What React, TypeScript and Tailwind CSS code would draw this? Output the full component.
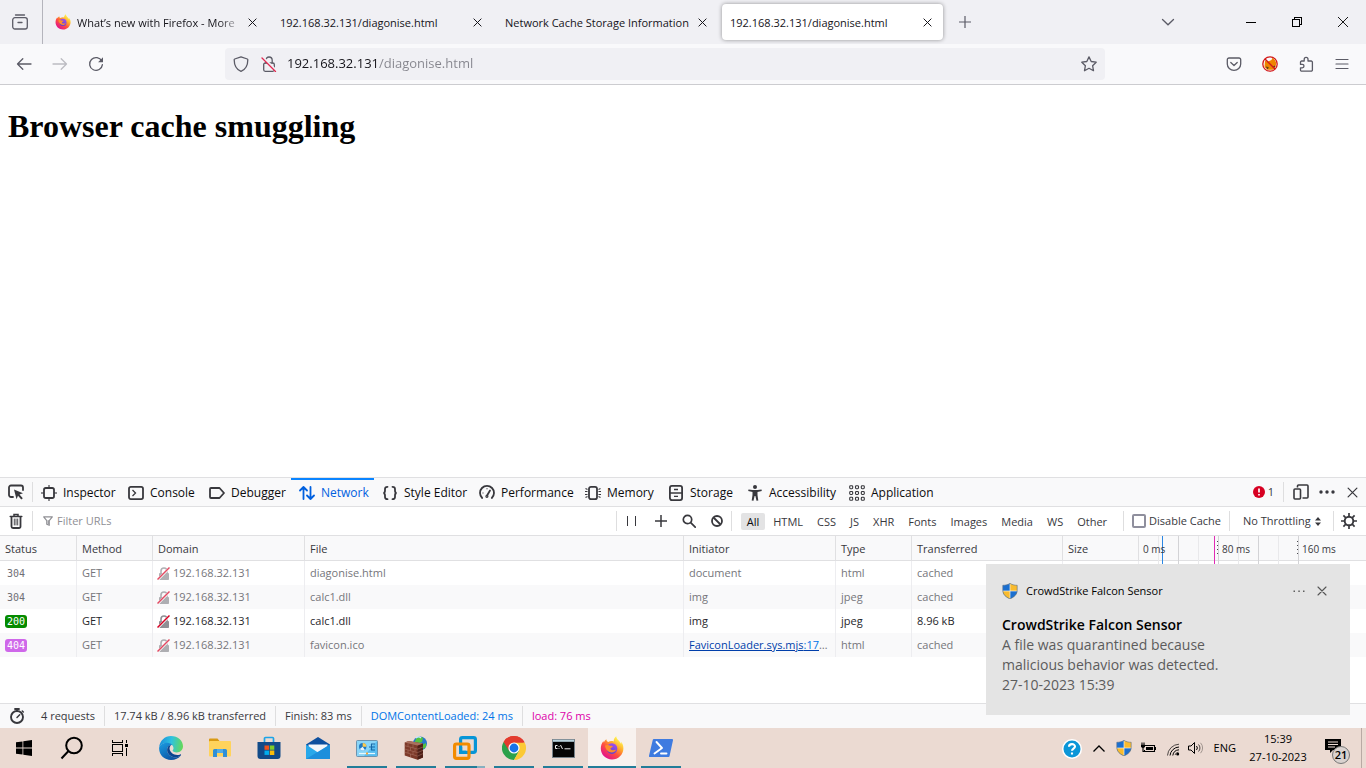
import React, { useState } from "react";

type IconProps = { className?: string };

/* ---------- shared drawings ---------- */

function Close({ className = "size-[9px]" }: IconProps) {
  return (
    <svg viewBox="0 0 10 10" className={className} fill="none" stroke="currentColor" strokeWidth="1.1" strokeLinecap="round">
      <path d="M1 1l8 8M9 1l-8 8" />
    </svg>
  );
}

function FirefoxLogo({ id, className = "size-4" }: IconProps & { id: string }) {
  return (
    <svg viewBox="0 0 24 24" className={className}>
      <defs>
        <linearGradient id={id + "a"} x1="0.85" y1="0.1" x2="0.2" y2="0.95">
          <stop offset="0.05" stopColor="#fff44f" />
          <stop offset="0.35" stopColor="#ffa42b" />
          <stop offset="0.6" stopColor="#ff4f3f" />
          <stop offset="0.95" stopColor="#e31587" />
        </linearGradient>
        <linearGradient id={id + "b"} x1="0.8" y1="0" x2="0.3" y2="1">
          <stop offset="0" stopColor="#a450f0" />
          <stop offset="1" stopColor="#5b43c8" />
        </linearGradient>
      </defs>
      <path
        d="M16.200.3c-1.900 1.500-2.600 3.500-2.500 5.100-1.700-.6-4-.5-5.400.6C7 5.600 6.400 4.400 6.400 3.200 5 4 4.200 5.300 3.900 6.500c-.3-.4-.5-.9-.5-1.500C1.700 7.200.8 9.800.8 12.500.8 18.600 5.800 23.400 12 23.400s11.400-4.900 11.400-11c0-2.800-1-5-2.300-6.600.2.900.2 1.600 0 2.200C20 4.900 16.600 3.900 16.200.3z"
        fill={"url(#" + id + "a)"}
      />
      <circle cx="12" cy="12.600" r="5.300" fill={"url(#" + id + "b)"} />
      <path d="M5 9.500c2-.9 4-.6 5.200.3 1 0 2.300.1 2.600.6-.1.900-1.700 1-2.300 1.900-.3.900.8 2 2.300 2 1.300 0 2.200-.6 3.300-.5-.8 1.800-2.500 2.700-4.300 2.700-3.500 0-6.400-3-6.800-7z" fill="#ff8b2b" />
    </svg>
  );
}

function UacShield({ className = "size-4" }: IconProps) {
  return (
    <svg viewBox="0 0 16 16" className={className}>
      <path d="M8 .3C6 1.700 3.500 2.300.8 2.300v4.900C.8 11.500 4 14.300 8 15.800z" fill="#1a6fd0" />
      <path d="M8 .3c2 1.400 4.500 2 7.200 2v4.900c0 4.300-3.200 7.100-7.200 8.600z" fill="#f9bb2d" />
      <path d="M.8 8H8v7.800C4.200 14.400 1.100 11.900.8 8z" fill="#f9bb2d" />
      <path d="M15.200 8H8v7.800c3.800-1.400 6.900-3.900 7.200-7.800z" fill="#1a6fd0" />
      <path d="M8 .3v15.500M.8 8h14.400" stroke="#f4f1e6" strokeWidth="0.700" />
      <path d="M8 .3C6 1.700 3.500 2.300.8 2.300v4.900c0 4.300 3.200 7.100 7.200 8.600 4-1.500 7.200-4.300 7.200-8.600V2.300C12.500 2.300 10 1.700 8 .3z" fill="none" stroke="#5d7186" strokeWidth="0.600" />
    </svg>
  );
}

/* ---------- browser tabs ---------- */

const pageTabs = [
  { title: "What’s new with Firefox - More", icon: true },
  { title: "192.168.32.131/diagonise.html", icon: false },
  { title: "Network Cache Storage Information", icon: false },
  { title: "192.168.32.131/diagonise.html", icon: false },
];

function TabStrip() {
  const [active, setActive] = useState(3);
  return (
    <header className="flex h-11 items-stretch bg-[#f0f0f4] text-[#15141a]">
      <button aria-label="Firefox View" className="flex w-[43px] items-center justify-center border-r border-[#b4b4bc] pr-0.5 text-[#5b5b66]">
        <svg viewBox="0 0 16 16" className="size-4" fill="none" stroke="currentColor" strokeWidth="1.300" strokeLinecap="round">
          <path d="M3.500 1h9" />
          <rect x="0.700" y="3.700" width="14.600" height="11.300" rx="2.200" />
          <path d="M2 3.700M6 8.500h4" />
        </svg>
      </button>
      <div role="tablist" className="ml-1 flex items-center gap-1">
        {pageTabs.map((t, i) => (
          <div
            key={i}
            className={
              i === active
                ? "flex h-9 w-[221px] items-center rounded bg-white pr-[11px] pl-2 shadow-[0_0_4px_rgba(0,0,0,0.400)]"
                : "flex h-9 w-[221px] items-center rounded pr-[11px] pl-2"
            }
          >
            {t.icon && <FirefoxLogo id="tabfx" className="mr-1.5 size-4 shrink-0" />}
            <button
              role="tab"
              aria-selected={i === active}
              onClick={() => setActive(i)}
              className={
                t.icon
                  ? "min-w-0 flex-1 overflow-hidden mask-r-from-85% pt-0.5 text-left text-[11px] whitespace-nowrap"
                  : "min-w-0 flex-1 overflow-hidden pt-0.5 text-left text-[11px] whitespace-nowrap"
              }
            >
              {t.title}
            </button>
            <button aria-label="Close tab" className="ml-1 flex shrink-0 items-center">
              <Close />
            </button>
          </div>
        ))}
      </div>
      <button aria-label="New tab" className="ml-1 flex w-9 items-center justify-center text-[#5b5b66]">
        <svg viewBox="0 0 12 12" className="size-3" stroke="currentColor" strokeWidth="1.200">
          <path d="M6 0v12M0 6h12" />
        </svg>
      </button>
      <div className="flex-1" />
      <button aria-label="List all tabs" className="mr-[42px] flex w-9 items-center justify-center text-[#5b5b66]">
        <svg viewBox="0 0 14 8" className="h-2 w-3.5" fill="none" stroke="currentColor" strokeWidth="1.300" strokeLinecap="round">
          <path d="M1.500 1.500L7 6.800l5.500-5.300" />
        </svg>
      </button>
      <button aria-label="Minimize" className="flex w-[46px] items-center justify-center">
        <span className="h-px w-2.5 bg-black" />
      </button>
      <button aria-label="Restore" className="flex w-[46px] items-center justify-center">
        <svg viewBox="0 0 10 10" className="size-2.5" fill="none" stroke="#000" shapeRendering="crispEdges">
          <path d="M.5 2.500h7v7h-7zM2.500 2.500v-2h7v7h-2" />
        </svg>
      </button>
      <button aria-label="Close window" className="flex w-[46px] items-center justify-center">
        <svg viewBox="0 0 10 10" className="size-2.5" fill="none" stroke="#000" strokeWidth="0.900">
          <path d="M0 0l10 10M10 0L0 10" />
        </svg>
      </button>
    </header>
  );
}

/* ---------- navigation bar ---------- */

function NavButton({ label, dim, children }: { label: string; dim?: boolean; children: React.ReactNode }) {
  return (
    <button aria-label={label} className={dim ? "flex w-9 items-center justify-center text-[#bcbcc2]" : "flex w-9 items-center justify-center text-[#5b5b66]"}>
      {children}
    </button>
  );
}

function NavBar() {
  return (
    <nav className="flex h-[41px] items-stretch border-b border-[#ccccd0] bg-[#f9f9fb] px-1.5">
      <NavButton label="Back">
        <svg viewBox="0 0 16 16" className="size-4" fill="none" stroke="currentColor" strokeWidth="1.300" strokeLinecap="round" strokeLinejoin="round">
          <path d="M15 8H1.500M6.800 2.700L1.500 8l5.300 5.300" />
        </svg>
      </NavButton>
      <NavButton label="Forward" dim>
        <svg viewBox="0 0 16 16" className="size-4" fill="none" stroke="currentColor" strokeWidth="1.300" strokeLinecap="round" strokeLinejoin="round">
          <path d="M1 8h13.500M9.200 2.700L14.500 8l-5.300 5.300" />
        </svg>
      </NavButton>
      <NavButton label="Reload">
        <svg viewBox="0 0 16 16" className="size-4" fill="none" stroke="currentColor" strokeWidth="1.300" strokeLinecap="round">
          <path d="M13.800 5.200A6.400 6.400 0 1 0 14.400 8.600" />
          <path d="M15 1.300v4.900h-4.900z" fill="currentColor" stroke="none" />
        </svg>
      </NavButton>
      <div className="mx-[111px] my-1 flex flex-1 items-center rounded bg-[#f0f0f4] px-2 text-[#5b5b66]">
        <button aria-label="Tracking protection">
          <svg viewBox="0 0 16 16" className="size-4" fill="none" stroke="currentColor" strokeWidth="1.300" strokeLinejoin="round">
            <path d="M8 .8L14.300 3c.3.100.5.400.5.700C14.800 9.500 12.500 13.500 8 15.300 3.500 13.500 1.200 9.500 1.200 3.700c0-.3.200-.6.500-.7z" />
          </svg>
        </button>
        <button aria-label="Connection not secure" className="ml-3">
          <svg viewBox="0 0 16 16" className="size-4" fill="none" strokeLinecap="round">
            <path d="M4.800 7V4.200a3.200 3.200 0 0 1 6.400 0V7" stroke="currentColor" strokeWidth="1.300" />
            <rect x="2.700" y="7" width="10.600" height="8.300" rx="1.500" stroke="currentColor" strokeWidth="1.300" />
            <path d="M1.800 1.400l13.400 13.400" stroke="#f0f0f4" strokeWidth="2.500" />
            <path d="M1 2l13.500 13.500" stroke="#e22850" strokeWidth="1.300" />
          </svg>
        </button>
        <input
          aria-label="Address"
          defaultValue="192.168.32.131/diagonise.html"
          className="ml-2.5 min-w-0 flex-1 bg-[linear-gradient(90deg,#15141a_91px,#85858d_91px)] bg-clip-text text-[13px] text-transparent outline-none"
        />
        <button aria-label="Bookmark this page">
          <svg viewBox="0 0 16 16" className="size-4" fill="none" stroke="currentColor" strokeWidth="1.300" strokeLinejoin="round">
            <path d="M8 .9l2.200 4.600 5 .7-3.600 3.500.9 5L8 12.300l-4.500 2.400.9-5L.8 6.200l5-.7z" />
          </svg>
        </button>
      </div>
      <NavButton label="Save to Pocket">
        <svg viewBox="0 0 16 16" className="size-4" fill="none" stroke="currentColor" strokeWidth="1.300" strokeLinecap="round" strokeLinejoin="round">
          <path d="M3 2h10a1.700 1.700 0 0 1 1.700 1.700V8a6.700 6.300 0 0 1-13.400 0V3.700A1.700 1.700 0 0 1 3 2z" />
          <path d="M4.800 6.500L8 9.500l3.200-3" />
        </svg>
      </NavButton>
      <NavButton label="FoxyProxy">
        <svg viewBox="0 0 16 16" className="size-4" fill="none">
          <path d="M3 4.500l2.500 1.300L9.500 4l1-2.200L13 4l1.300 3-.8 4-2.500 2.800H5.500L2.500 11z" fill="#ee8500" />
          <path d="M4 11l2 .5-.7 1.500M11 11.500l2-1.500" stroke="#5a3a1a" strokeWidth="1.100" />
          <circle cx="8" cy="8" r="7.200" stroke="#d31818" strokeWidth="1.300" />
          <path d="M3 3l10 10" stroke="#d31818" strokeWidth="1.400" />
        </svg>
      </NavButton>
      <NavButton label="Extensions">
        <svg viewBox="0 0 16 16" className="size-4" fill="none" stroke="currentColor" strokeWidth="1.300" strokeLinejoin="round">
          <path d="M3.700 5H6.200V3.200a1.900 1.900 0 0 1 3.800 0V5h3.200a1.200 1.200 0 0 1 1.200 1.200v7.700a1.200 1.200 0 0 1-1.200 1.200H3.700a1.200 1.200 0 0 1-1.200-1.200v-2.100h1.800a1.700 1.700 0 0 0 0-3.400H2.500V6.200A1.200 1.200 0 0 1 3.700 5z" />
        </svg>
      </NavButton>
      <NavButton label="Open application menu">
        <svg viewBox="0 0 14 14" className="size-3.5" stroke="currentColor" strokeWidth="1.200" strokeLinecap="round">
          <path d="M1 2.500h12M1 7h12M1 11.500h12" />
        </svg>
      </NavButton>
    </nav>
  );
}

/* ---------- devtools ---------- */

const stroke = { fill: "none", stroke: "currentColor", strokeWidth: 1.8 } as const;

const panels: { name: string; width: string; icon: React.ReactNode }[] = [
  {
    name: "Inspector",
    width: "w-[87px]",
    icon: (
      <g {...stroke}>
        <rect x="3" y="3" width="10" height="10" rx="1.800" />
        <path d="M8 0v3M8 13v3M0 8h3M13 8h3" strokeWidth="1.500" opacity="0.750" />
      </g>
    ),
  },
  {
    name: "Console",
    width: "w-[81px]",
    icon: (
      <g {...stroke}>
        <rect x="1" y="1.900" width="14" height="12.200" rx="1.800" />
        <path d="M4.500 5l3 3-3 3" strokeWidth="1.300" />
      </g>
    ),
  },
  {
    name: "Debugger",
    width: "w-[90px]",
    icon: <path {...stroke} strokeLinejoin="round" d="M2 3h8.500L15 8l-4.500 5H2a1 1 0 0 1-1-1V4a1 1 0 0 1 1-1z" />,
  },
  {
    name: "Network",
    width: "w-[83px]",
    icon: <path {...stroke} strokeLinecap="round" strokeLinejoin="round" d="M4.500 14V2M1 5.500L4.500 2 8 5.500M11.500 2v12M8 10.500l3.500 3.500 3.500-3.500" />,
  },
  {
    name: "Style Editor",
    width: "w-[97px]",
    icon: (
      <path
        {...stroke}
        strokeLinecap="round"
        d="M5.500 1.800C3.500 1.800 3 2.600 3 4v1.500C3 7 2.500 8 1.300 8 2.500 8 3 9 3 10.500V12c0 1.400.5 2.200 2.500 2.200M10.500 1.800c2 0 2.500.8 2.500 2.200v1.500C13 7 13.500 8 14.700 8 13.500 8 13 9 13 10.500V12c0 1.400-.5 2.200-2.500 2.200"
      />
    ),
  },
  {
    name: "Performance",
    width: "w-[106px]",
    icon: (
      <g {...stroke}>
        <path d="M3.200 13A7 7 0 1 1 12.800 13" strokeLinecap="round" />
        <path d="M11 5.500L8.200 10.200" strokeLinecap="round" />
        <circle cx="7.900" cy="11.300" r="1" strokeWidth="1.200" />
        <path d="M3.500 8h1M8 3.300v1" strokeWidth="1.100" />
      </g>
    ),
  },
  {
    name: "Memory",
    width: "w-[83px]",
    icon: (
      <g {...stroke}>
        <rect x="4" y="1.800" width="8" height="12.400" rx="2" />
        <path d="M.5 3.500l2 1M0 6.500h2.500M0 9.500h2.500M.5 12.500l2-1M15.500 3.500l-2 1M16 6.500h-2.500M16 9.500h-2.500M15.500 12.500l-2-1" strokeWidth="1.100" />
      </g>
    ),
  },
  {
    name: "Storage",
    width: "w-[79px]",
    icon: (
      <g {...stroke}>
        <rect x="1.900" y="0.900" width="12.200" height="14.200" rx="2" />
        <path d="M2 8h12" strokeWidth="1.500" />
        <path d="M6 4.500h4M6 11.300h4" strokeWidth="1.300" />
      </g>
    ),
  },
  {
    name: "Accessibility",
    width: "w-[102px]",
    icon: (
      <g fill="currentColor">
        <circle cx="8" cy="2.100" r="2" />
        <path d="M1.500 4.500l4 .6h5l4-.6.300 1.600-4.300 1V10l.8 5.500-1.800.3L8.400 11h-.8l-1.100 4.800-1.800-.3.800-5.500V7.100l-4.300-1z" />
      </g>
    ),
  },
  {
    name: "Application",
    width: "w-[99px]",
    icon: (
      <g fill="none" stroke="currentColor" strokeWidth="1.100">
        {[2.2, 8, 13.8].map((y) => [2.2, 8, 13.8].map((x) => <rect key={x + "-" + y} x={x - 1.500} y={y - 1.500} width="3" height="3" rx="0.900" />))}
      </g>
    ),
  },
];

function Divider({ className = "" }: IconProps) {
  return <span className={"h-5 w-px shrink-0 bg-[#dededf] " + className} />;
}

function DevtoolsTabs() {
  const [panel, setPanel] = useState("Network");
  return (
    <div className="flex h-7 items-center bg-[#f9f9fa] text-[#38383d]">
      <button aria-label="Pick an element" className="flex w-8 justify-center">
        <svg viewBox="0 0 16 16" className="size-4">
          <path d="M5 13H3a2 2 0 0 1-2-2V3.500a2 2 0 0 1 2-2h10a2 2 0 0 1 2 2V6" {...stroke} strokeLinecap="round" />
          <path d="M6 5.500l9 3.800-3.500 1.200 3.300 3.700-1.500 1.300-3.300-3.700-1.500 3.400z" fill="currentColor" />
        </svg>
      </button>
      <Divider />
      <div role="tablist" className="flex self-stretch">
        {panels.map((p) => (
          <button
            key={p.name}
            role="tab"
            aria-selected={p.name === panel}
            onClick={() => setPanel(p.name)}
            className={
              (p.name === panel ? "border-[#0a84ff] text-[#0060df] " : "border-transparent ") +
              "flex items-center gap-1.5 border-t-2 pl-2 text-xs whitespace-nowrap " +
              p.width
            }
          >
            <svg viewBox="0 0 16 16" className="size-4 shrink-0">
              {p.icon}
            </svg>
            <span className={p.name === panel ? "" : "text-[#0c0c0d]"}>{p.name}</span>
          </button>
        ))}
      </div>
      <div className="flex-1" />
      <button aria-label="1 error" className="mr-[9px] flex items-center gap-[3px] text-[11px]">
        <svg viewBox="0 0 12 12" className="size-3">
          <circle cx="6" cy="6" r="6" fill="#d70022" />
          <path d="M6 2.500v4M6 8v1.600" stroke="#fff" strokeWidth="1.700" />
        </svg>
        1
      </button>
      <Divider />
      <button aria-label="Responsive design mode" className="ml-[9px]">
        <svg viewBox="0 0 16 16" className="size-4" {...stroke} strokeWidth="1.600">
          <path d="M4.500 3.500V2a1 1 0 0 1 1-1H14a1 1 0 0 1 1 1v11a1 1 0 0 1-1 1H9.500" />
          <rect x="1" y="5" width="6.500" height="10" rx="1" />
        </svg>
      </button>
      <button aria-label="Customize developer tools" className="ml-2.5">
        <svg viewBox="0 0 16 16" className="size-4" fill="currentColor">
          <circle cx="2" cy="8" r="1.700" />
          <circle cx="8" cy="8" r="1.700" />
          <circle cx="14" cy="8" r="1.700" />
        </svg>
      </button>
      <button aria-label="Close developer tools" className="mr-2 ml-3">
        <Close className="size-[11px]" />
      </button>
    </div>
  );
}

const filters = ["All", "HTML", "CSS", "JS", "XHR", "Fonts", "Images", "Media", "WS", "Other"];

function FilterBar() {
  const [active, setActive] = useState("All");
  return (
    <div className="flex h-[29px] items-center border-t border-[#e0e0e2] bg-white text-[11px] text-[#38383d]">
      <button aria-label="Clear" className="flex w-8 justify-center">
        <svg viewBox="0 0 16 16" className="size-4" fill="none" stroke="currentColor" strokeLinecap="round">
          <path d="M2.200 3.500h11.600M6 3V1.500h4V3" strokeWidth="1.500" />
          <path d="M3.500 4.500v9a1.500 1.500 0 0 0 1.500 1.500h6a1.500 1.500 0 0 0 1.500-1.500v-9" strokeWidth="1.800" />
          <path d="M6.300 6v6M8 6v6M9.700 6v6" strokeWidth="0.900" />
        </svg>
      </button>
      <Divider />
      <label className="ml-2.5 flex flex-1 items-center gap-1">
        <svg viewBox="0 0 12 12" className="size-2.5" fill="none" stroke="#8f8f94" strokeWidth="1.400" strokeLinejoin="round">
          <path d="M.8 1h10.400L7.500 5.500v5.700l-3-1.400V5.500z" />
          <path d="M6.300 5v5" />
        </svg>
        <input aria-label="Filter URLs" placeholder="Filter URLs" className="min-w-0 flex-1 outline-none placeholder:text-[#8f8f94]" />
      </label>
      <Divider />
      <button aria-label="Pause" className="flex w-[30px] justify-center">
        <svg viewBox="0 0 9 10" className="h-2.5 w-[9px]" stroke="currentColor" strokeWidth="1" shapeRendering="crispEdges">
          <path d="M.5 0v10M8.500 0v10" />
        </svg>
      </button>
      <button aria-label="New request" className="flex w-7 justify-center">
        <svg viewBox="0 0 12 12" className="size-3" stroke="currentColor" strokeWidth="1.500">
          <path d="M6 0v12M0 6h12" />
        </svg>
      </button>
      <button aria-label="Search" className="flex w-7 justify-center">
        <svg viewBox="0 0 14 14" className="size-3.5" fill="none" stroke="currentColor" strokeWidth="1.700" strokeLinecap="round">
          <circle cx="5.500" cy="5.500" r="4.200" />
          <path d="M8.700 8.700l4.500 4.500" />
        </svg>
      </button>
      <button aria-label="Request blocking" className="flex w-7 justify-center">
        <svg viewBox="0 0 12 12" className="size-3" fill="none" stroke="currentColor" strokeWidth="1.800">
          <circle cx="6" cy="6" r="5" />
          <path d="M2.500 2.500l7 7" />
        </svg>
      </button>
      <Divider />
      <div className="ml-[9px] flex gap-0.5">
        {filters.map((f) => (
          <button
            key={f}
            aria-pressed={f === active}
            onClick={() => setActive(f)}
            className={f === active ? "h-[17px] rounded-[2px] bg-[#e3e3e4] px-1.5 leading-[17px] text-[#0c0c0d]" : "h-[17px] rounded-[2px] px-1.5 leading-[17px]"}
          >
            {f}
          </button>
        ))}
      </div>
      <Divider className="ml-2.5" />
      <label className="mx-2 flex items-center gap-[3px]">
        <input type="checkbox" className="size-3.5 appearance-none rounded-[2px] border-2 border-[#8f8f9d] bg-white checked:bg-[#0060df]" />
        Disable Cache
      </label>
      <Divider />
      <label className="mr-3 ml-[13px] flex items-center gap-1">
        <select aria-label="Throttling" className="appearance-none bg-transparent outline-none">
          <option>No Throttling</option>
        </select>
        <svg viewBox="0 0 6 9" className="h-[9px] w-1.5" fill="currentColor">
          <path d="M0 3.500h6L3 0zM0 5.500h6L3 9z" />
        </svg>
      </label>
      <Divider />
      <button aria-label="Network settings" className="flex w-8 justify-center pr-0.5">
        <svg viewBox="0 0 16 16" className="size-4" fill="none" stroke="currentColor">
          <circle cx="8" cy="8" r="4.300" strokeWidth="1.900" />
          <path d="M8 0v3.500M8 12.500V16M0 8h3.500M12.500 8H16M2.400 2.400l2.400 2.400M11.200 11.200l2.400 2.400M13.600 2.400l-2.400 2.400M4.800 11.200l-2.400 2.400" strokeWidth="1.700" />
        </svg>
      </button>
    </div>
  );
}

const requests = [
  { status: "304", file: "diagonise.html", initiator: "document", type: "html", transferred: "cached", live: false },
  { status: "304", file: "calc1.dll", initiator: "img", type: "jpeg", transferred: "cached", live: false },
  { status: "200", file: "calc1.dll", initiator: "img", type: "jpeg", transferred: "8.96 kB", live: true },
  { status: "404", file: "favicon.ico", initiator: "", type: "html", transferred: "cached", live: false },
];

const badge: Record<string, string> = {
  "304": "text-[#6f6f75] px-0.5",
  "200": "bg-[#058b00] text-white px-0.5",
  "404": "bg-[#cf68ea] text-white px-0.5",
};

function InsecureLock() {
  return (
    <svg viewBox="0 0 13 13" className="h-[13px] w-[13px] shrink-0">
      <path d="M4 6.500V4a3 3 0 0 1 6 0v2.500" fill="none" stroke="#8f8f94" strokeWidth="1.600" />
      <rect x="2" y="6" width="10" height="7" rx="0.800" fill="#8f8f94" />
      <path d="M1 12.500L12.500 .8" stroke="#fff" strokeWidth="2.400" />
      <path d="M.5 12.500L12.500 .5" stroke="#d70022" strokeWidth="1.500" />
    </svg>
  );
}

function RequestTable() {
  const head = "relative h-[25px] border-r border-b border-[#e0e0e2] px-[5px] pt-0.5 text-left font-normal";
  const cell = "truncate border-r border-[#ededf0] px-[5px]";
  return (
    <table className="w-full table-fixed border-separate border-spacing-0 text-[11px] text-[#38383d]">
      <colgroup>
        <col className="w-[77px]" />
        <col className="w-[76px]" />
        <col className="w-[152px]" />
        <col />
        <col className="w-[152px]" />
        <col className="w-[76px]" />
        <col className="w-[151px]" />
        <col className="w-[76px]" />
        <col className="w-[227px]" />
      </colgroup>
      <thead className="bg-[#f9f9fa]">
        <tr>
          {["Status", "Method", "Domain", "File", "Initiator", "Type", "Transferred", "Size"].map((h) => (
            <th key={h} className={head}>
              {h}
            </th>
          ))}
          <th className="relative h-[25px] border-b border-[#e0e0e2] p-0 font-normal">
            <svg className="absolute top-0 left-0 h-7 w-full" shapeRendering="crispEdges">
              <path d="M19.500 0v28M59.500 0v28M99.500 0v28M139.500 0v28" stroke="#e9e9eb" />
              <path d="M39.500 0v28M79.500 0v28M119.500 0v28M159.500 0v28" stroke="#d3d3d6" />
              <path d="M78.500 5v15M158.500 5v15" stroke="#4a4a4f" strokeDasharray="1 3" />
              <path d="M23.500 0v28" stroke="#2b87e3" />
              <path d="M75.500 0v28" stroke="#e02cb4" />
            </svg>
            <div className="relative flex pt-0.5 text-left text-[10px]">
              <span className="w-[79px] pl-1">0 ms</span>
              <span className="w-20 pl-1">80 ms</span>
              <span className="pl-1">160 ms</span>
            </div>
          </th>
        </tr>
      </thead>
      <tbody>
        {requests.map((r, i) => (
          <tr key={i} className={(i % 2 ? "bg-[#f9f9fa] " : "bg-white ") + "h-6 " + (r.live ? "text-[#27272b]" : "text-[#76767b]")}>
            <td className={cell}>
              <span className={"inline-block h-[13px] rounded-[3px] align-middle font-['DejaVu_Sans_Mono',monospace] text-[10px] leading-[13px] " + badge[r.status]}>{r.status}</span>
            </td>
            <td className={cell}>GET</td>
            <td className={cell}>
              <div className={r.live ? "-ml-px flex items-center gap-[3px]" : "-ml-px flex items-center gap-[3px] [&>svg]:opacity-70"}>
                <InsecureLock />
                192.168.32.131
              </div>
            </td>
            <td className={cell}>{r.file}</td>
            <td className={cell}>
              {r.initiator || (
                <>
                  <a href="#favicon-loader" className="text-[#003eaa] underline">
                    FaviconLoader.sys.mjs<span className="text-[#0074e8]">:17</span>
                  </a>
                  …
                </>
              )}
            </td>
            <td className={cell}>{r.type}</td>
            <td className={cell}>{r.transferred}</td>
            <td className={cell} />
            <td />
          </tr>
        ))}
      </tbody>
    </table>
  );
}

function StatusBar() {
  return (
    <div className="flex h-[25px] items-center border-t border-[#e0e0e2] bg-[#f9f9fa] text-[11px] text-[#38383d]">
      <button aria-label="Performance analysis" className="mr-[7px] ml-[9px]">
        <svg viewBox="0 0 16 16" className="size-4" fill="none" stroke="currentColor" strokeLinecap="round">
          <circle cx="8" cy="9" r="6" strokeWidth="1.900" />
          <path d="M6 1h4M8 1v2" strokeWidth="1.800" />
          <path d="M8 9.500L10.700 6.800" strokeWidth="1.500" />
          <path d="M13.300 3l1 1" strokeWidth="1.500" />
        </svg>
      </button>
      <span className="px-[9px]">4 requests</span>
      <Divider className="h-4" />
      <span className="px-[9px]">17.74 kB / 8.96 kB transferred</span>
      <Divider className="h-4" />
      <span className="px-[9px]">Finish: 83 ms</span>
      <Divider className="h-4" />
      <span className="px-[9px] text-[#0074e8]">DOMContentLoaded: 24 ms</span>
      <Divider className="h-4" />
      <span className="px-[9px] text-[#dd00a9]">load: 76 ms</span>
    </div>
  );
}

/* ---------- notification ---------- */

function Toast() {
  return (
    <aside className="fixed right-4 bottom-[53px] h-[151px] w-[364px] bg-[#e4e4e4] px-4 pt-[19px]">
      <div className="flex h-4 items-center">
        <UacShield />
        <span className="ml-2 flex-1 text-[11px] text-black">CrowdStrike Falcon Sensor</span>
        <button aria-label="More options">
          <svg viewBox="0 0 12 4" className="h-1 w-3" fill="#5f5f5f">
            <path d="M.5 1.500h1.500V3H.5zM5.300 1.500h1.500V3H5.300zM10 1.500h1.500V3H10z" />
          </svg>
        </button>
        <button aria-label="Dismiss" className="mr-[7px] ml-3 text-[#555]">
          <Close className="size-2.5" />
        </button>
      </div>
      <div className="mt-4 text-[14px] leading-5 text-[#5c5c5c]">
        <h2 className="font-semibold text-black">CrowdStrike Falcon Sensor</h2>
        <p className="w-60">A file was quarantined because malicious behavior was detected.</p>
        <p>27-10-2023 15:39</p>
      </div>
    </aside>
  );
}

/* ---------- taskbar ---------- */

function Edge() {
  return (
    <svg viewBox="0 0 24 24" className="size-6">
      <defs>
        <linearGradient id="edgeTop" x1="0" y1="0.400" x2="1" y2="0.500">
          <stop offset="0" stopColor="#1b8edb" />
          <stop offset="0.500" stopColor="#2fc2df" />
          <stop offset="1" stopColor="#65d957" />
        </linearGradient>
        <linearGradient id="edgeLow" x1="0" y1="0" x2="0.700" y2="1">
          <stop offset="0" stopColor="#1b9de2" />
          <stop offset="1" stopColor="#0c4fa0" />
        </linearGradient>
      </defs>
      <path d="M.2 11C.8 4.800 5.800 0 12 0c6.900 0 12 4.800 12 10.300 0 3.700-2.900 6.200-6.200 6.200-2.500 0-4.200-.9-4.200-1.900 0-.6.900-.9.900-2.400C14.500 9.600 11.900 7 8 7 4 7 1.200 9 .2 11z" fill="url(#edgeTop)" />
      <path d="M.1 12.500C0 9.500 3.500 6.800 8 6.800c2.300 0 4.200.9 5.400 2.200-3.500-.3-5.300 2.200-5.300 5 0 4 4 7.300 8.400 7.300 2 0 3.900-.8 5.300-1.900C19.700 22.200 16.200 24 12 24 5.300 24 .1 19 .1 12.500z" fill="url(#edgeLow)" />
      <path d="M8.100 14c0 4 4 7.300 8.400 7.300 2 0 3.900-.8 5.300-1.900.5-.6.200-1.300-.5-1-5 1.900-10.200-1.200-10.700-5.400-.2-1.600.6-3.200 1.700-4-2.900.2-4.200 2.400-4.200 5z" fill="#0b4590" />
    </svg>
  );
}

function Folder() {
  return (
    <svg viewBox="0 0 22 20" className="h-5 w-[22px]">
      <path d="M0 1.500A1 1 0 0 1 1 .5h7.500l2 2.500H21v6H0z" fill="#d99a14" />
      <path d="M1 3h20a1 1 0 0 1 1 1v13.500a1 1 0 0 1-1 1H1a1 1 0 0 1-1-1V4a1 1 0 0 1 1-1z" fill="#ffd35c" />
      <path d="M4 19v-6.500A1.500 1.500 0 0 1 5.500 11h11a1.500 1.500 0 0 1 1.500 1.500V19h-4v-4H8v4z" fill="#2f8fd8" />
      <path d="M8 15h6v-4H8z" fill="#51abe8" />
    </svg>
  );
}

function Store() {
  return (
    <svg viewBox="0 0 24 24" className="size-6">
      <path d="M7.500 7V2.500A1 1 0 0 1 8.500 1.500h7a1 1 0 0 1 1 1V7" fill="none" stroke="#1ba4e8" strokeWidth="1.700" />
      <path d="M.5 6h23v14a3 3 0 0 1-3 3h-17a3 3 0 0 1-3-3z" fill="#124a88" />
      <path d="M7.500 9.500H12v4.300H7.500z" fill="#f1511b" />
      <path d="M12.800 9.500h4.500v4.300h-4.500z" fill="#80cc28" />
      <path d="M7.500 14.600H12v4.300H7.500z" fill="#00adef" />
      <path d="M12.800 14.600h4.500v4.300h-4.500z" fill="#fbbc09" />
    </svg>
  );
}

function Mail() {
  return (
    <svg viewBox="0 0 24 24" className="size-6">
      <path d="M0 8.500L12 1l12 7.500v5H0z" fill="#0d4f9e" />
      <path d="M2.500 8.500h19v6l-9.500 5-9.500-5z" fill="#f4f6fa" />
      <path d="M0 8.500l12 8 12-8V23H0z" fill="#28a8ea" />
      <path d="M0 23l24-14.500V23z" fill="#1c8fdc" />
    </svg>
  );
}

function ControlPanel() {
  return (
    <svg viewBox="0 0 22 17" className="h-[17px] w-[22px]">
      <rect x="0.500" y="0.500" width="21" height="16" rx="1" fill="#59bdf0" stroke="#6d93ae" />
      <path d="M1 1h20L8 16H1z" fill="#8ad5f8" />
      <circle cx="6.700" cy="6.700" r="3.700" fill="#1e78c2" />
      <path d="M6.700 6.700V3a3.700 3.700 0 0 1 3.700 3.700z" fill="#ffc94a" />
      <path d="M6.700 6.700L3.800 9a3.700 3.700 0 0 0 5 .7z" fill="#e8f6ff" />
      <path d="M13 7h2M15.500 4v6M15 4h4M15 7h4M15 10h4" stroke="#1668a8" strokeWidth="1.200" fill="none" />
      <path d="M3 13.500h16" stroke="#e8f8ff" strokeWidth="1.200" />
      <path d="M10 12.500h2v2h-2z" fill="#f4a63c" />
    </svg>
  );
}

function Firewall() {
  return (
    <svg viewBox="0 0 24 24" className="size-6">
      <circle cx="16" cy="7.500" r="7" fill="#2777c9" />
      <path d="M12 3c3-3 6-2 7-1l-1 4-3 1-1 3-4-2zM18 9l4-2v4l-3 2z" fill="#55c33f" />
      <path d="M12 2c2-1.500 4-1 5 0" stroke="#c4ecff" strokeWidth="1.200" fill="none" />
      <path d="M.7 6.500l4-1.500L19 7.500v14L13.500 23.800.7 19.500z" fill="#7d3a2a" />
      <path d="M13.500 9.500L19 7.500v14l-5.500 2.300z" fill="#4e2018" />
      <path d="M.7 6.500l4-1.500L19 7.500l-5.500 2z" fill="#a9705f" />
      <path d="M.7 9.700l12.800 3.400L19 11M.7 13l12.800 3.600 5.500-2.300M.7 16.200l12.800 3.900 5.500-2.500M4 7.500v3M9 8.700v3.200M6.500 11.500v3M11 12.600v3M4 14v3M9 15.500v3.200M6.500 18v3" stroke="#b5806f" strokeWidth="0.450" fill="none" />
    </svg>
  );
}

function Vmware() {
  return (
    <svg viewBox="0 0 24 24" className="size-6" fill="none" strokeWidth="3.200">
      <rect x="7.600" y="1.600" width="14.800" height="14.800" rx="1.800" stroke="#0695d7" />
      <rect x="1.600" y="8" width="14.400" height="14.400" rx="1.800" stroke="#f38b00" />
      <path d="M7.600 11V16.400H13" stroke="#0695d7" />
    </svg>
  );
}

function Chrome() {
  return (
    <svg viewBox="0 0 24 24" className="size-6">
      <path d="M12 12L1.600 6A12 12 0 0 1 22.400 6z" fill="#e33b2e" />
      <path d="M12 12L1.600 6A12 12 0 0 0 12 24l5.500-9.500z" fill="#2ba14b" />
      <path d="M12 6.500h10.700A12 12 0 0 1 12 24l5-9z" fill="#fcc934" />
      <path d="M1.600 6A12 12 0 0 1 22.600 6.500H12L7 14.500z" fill="#e33b2e" />
      <circle cx="12" cy="12" r="5.600" fill="#fff" />
      <circle cx="12" cy="12" r="4.400" fill="#1a73e8" />
    </svg>
  );
}

function Terminal() {
  return (
    <svg viewBox="0 0 23 19" className="h-[19px] w-[23px]">
      <rect x="0.500" y="0.500" width="22" height="18" fill="#050505" stroke="#77828a" />
      <path d="M1 .8h21v2H1z" fill="#b9d2dc" />
      <path d="M5.500 6.500H3.500v3h2M7 7v.8M7 9v.8M8.500 6l2 4M12.500 9.800h6" stroke="#eee" strokeWidth="1" fill="none" />
    </svg>
  );
}

function PowerShell() {
  return (
    <svg viewBox="0 0 24 18" className="h-[18px] w-6">
      <path d="M5 0h18a1 1 0 0 1 1 1.200l-3.500 16a1 1 0 0 1-1 .8H1a1 1 0 0 1-1-1.200L3.800.8A1.200 1.200 0 0 1 5 0z" fill="#3f7be0" />
      <path d="M7.500 3l5.500 6-7.500 5.500M12 14.500h5.500" stroke="#fff" strokeWidth="1.900" strokeLinecap="round" strokeLinejoin="round" fill="none" />
    </svg>
  );
}

const apps: { name: string; icon: React.ReactNode; state: "idle" | "open" | "multi" | "focus" }[] = [
  { name: "Microsoft Edge", icon: <Edge />, state: "idle" },
  { name: "File Explorer", icon: <Folder />, state: "idle" },
  { name: "Microsoft Store", icon: <Store />, state: "idle" },
  { name: "Mail", icon: <Mail />, state: "idle" },
  { name: "Control Panel", icon: <ControlPanel />, state: "open" },
  { name: "Firewall", icon: <Firewall />, state: "open" },
  { name: "VMware Workstation", icon: <Vmware />, state: "multi" },
  { name: "Google Chrome", icon: <Chrome />, state: "open" },
  { name: "Command Prompt", icon: <Terminal />, state: "open" },
  { name: "Firefox", icon: <FirefoxLogo id="barfx" className="size-6" />, state: "focus" },
  { name: "PowerShell", icon: <PowerShell />, state: "open" },
];

function Taskbar() {
  return (
    <footer className="flex h-10 items-stretch bg-[#ebdad2] text-black">
      <button aria-label="Start" className="flex w-12 items-center justify-center">
        <svg viewBox="0 0 16 16" className="size-4">
          <path d="M0 2.300l6.500-.9v6.200H0zM7.300 1.300L16 0v7.600H7.300zM0 8.400h6.500v6.200L0 13.700zM7.300 8.400H16V16l-8.700-1.300z" />
        </svg>
      </button>
      <button aria-label="Search" className="flex w-12 items-center justify-center">
        <svg viewBox="0 0 24 24" className="size-6" fill="none" stroke="#000" strokeWidth="2">
          <circle cx="14" cy="9.500" r="7.800" />
          <path d="M8.500 15L1.500 22.500" />
        </svg>
      </button>
      <button aria-label="Task view" className="flex w-12 items-center justify-center">
        <svg viewBox="0 0 16 16" className="size-4" fill="none" stroke="#000" shapeRendering="crispEdges">
          <path d="M.5 0v2.500h10V0M.5 16v-2.500h10V16M.5 4.500h10v7H.5zM14.500 0v3M14.500 8v8" />
          <path d="M13 4h3v3h-3z" fill="#000" stroke="none" />
        </svg>
      </button>
      <div className="ml-[3px] flex gap-px">
        {apps.map((a) => (
          <button
            key={a.name}
            aria-label={a.name}
            className={a.state === "focus" ? "flex w-12 flex-col items-center bg-[#f8f2ef]" : "flex w-12 flex-col items-center"}
          >
            <span className="flex flex-1 items-center pt-0.5">{a.icon}</span>
            {a.state === "idle" && <span className="h-0.5" />}
            {a.state === "open" && <span className="h-0.5 w-10 bg-[#237d99]" />}
            {a.state === "multi" && <span className="h-0.5 w-10 border-r-8 border-[#86b0c0] bg-[#237d99]" />}
            {a.state === "focus" && <span className="h-0.5 w-full bg-[#237d99]" />}
          </button>
        ))}
      </div>
      <div className="flex-1" />
      <button aria-label="Help" className="flex w-7 items-center justify-center pt-0.5">
        <svg viewBox="0 0 20 20" className="size-5">
          <circle cx="10" cy="10" r="10" fill="#fff" />
          <circle cx="10" cy="10" r="8.500" fill="#0b96d8" />
          <path d="M7 7.800C7 4.300 13 4.300 13 7.600c0 2-3 2.200-3 4.200M10 13.500v2" stroke="#fff" strokeWidth="2.100" fill="none" />
        </svg>
      </button>
      <button aria-label="Show hidden icons" className="flex w-[26px] items-center justify-center">
        <svg viewBox="0 0 12 7" className="h-[7px] w-3" fill="none" stroke="#000" strokeWidth="1.300">
          <path d="M.5 6.500L6 1l5.500 5.500" />
        </svg>
      </button>
      <button aria-label="Windows Security" className="flex w-6 items-center justify-center">
        <UacShield />
      </button>
      <button aria-label="Battery" className="flex w-6 items-center justify-center">
        <svg viewBox="0 0 16 12" className="h-3 w-4" fill="none" stroke="#000" strokeWidth="1.100">
          <path d="M5 3.500h9.500v6H4.500V8" />
          <path d="M6 5h7v3H6zM1 2.500h4V5L3.500 6H2.500L1 5z" fill="#000" stroke="none" />
          <path d="M2 .5v2M4 .5v2M3 6v3.500h2M15.500 5v3" />
        </svg>
      </button>
      <button aria-label="Network" className="flex w-[26px] items-center justify-center pt-0.5">
        <svg viewBox="0 0 14 14" className="size-3.5" fill="none" stroke="#000" strokeWidth="1">
          <path d="M4 13.500A9.500 9.500 0 0 1 13 5M6.800 13.500A6.700 6.700 0 0 1 13 7.800" />
          <circle cx="11.700" cy="12" r="1.500" fill="#000" stroke="none" />
          <path d="M1.500 13.500A12 12 0 0 1 13 2.200M9 13a4 4 0 0 1 3.500-2.800" stroke="#4c4644" />
        </svg>
      </button>
      <button aria-label="Volume" className="flex w-5 items-center justify-center">
        <svg viewBox="0 0 16 14" className="h-3.5 w-4" fill="none" stroke="#000" strokeWidth="1">
          <path d="M.5 5h2.500l3.500-3.500v11L3 9H.5zM8.500 5a3 3 0 0 1 0 4" />
          <path d="M10.500 3.500a5 5 0 0 1 0 7" stroke="#4c4644" />
          <path d="M12.500 1.800a7.500 7.500 0 0 1 0 10.400" stroke="#a1958f" />
        </svg>
      </button>
      <button className="ml-2 text-[11px]">ENG</button>
      <button className="ml-[7px] w-[70px] text-center text-[11px] leading-[18px]">
        <span className="block whitespace-nowrap">15:39</span>
        <span className="block whitespace-nowrap">27-10-2023</span>
      </button>
      <button aria-label="Notifications" className="relative flex w-10 items-center justify-center pb-1">
        <svg viewBox="0 0 16 16" className="size-4">
          <path d="M0 1h16v11H8l-3 3v-3H0z" />
          <path d="M3 4h10M3 6.500h10M3 9h7" stroke="#ecdbd4" />
        </svg>
        <span className="absolute top-[18px] left-[19px] flex size-[18px] items-center justify-center rounded-full border border-[#777] bg-[#d9d2cf] text-[11px] font-semibold">21</span>
      </button>
      <span className="mr-1 ml-2 w-px bg-[#b9aaa4]" />
    </footer>
  );
}

export default function App() {
  return (
    <div className="flex min-h-screen flex-col bg-white font-['Open_Sans','Noto_Sans',sans-serif]">
      <TabStrip />
      <NavBar />
      <main className="flex-1 px-2 pt-[22px]">
        <h1 className="font-['Liberation_Serif',serif] text-[32px] leading-[38px] font-bold text-black">Browser cache smuggling</h1>
      </main>
      <section aria-label="Developer tools" className="flex flex-col border-t border-[#e0e0e2]">
        <DevtoolsTabs />
        <FilterBar />
        <div className="min-h-[168px] border-t border-[#e0e0e2]">
          <RequestTable />
        </div>
        <StatusBar />
      </section>
      <Taskbar />
      <Toast />
    </div>
  );
}
